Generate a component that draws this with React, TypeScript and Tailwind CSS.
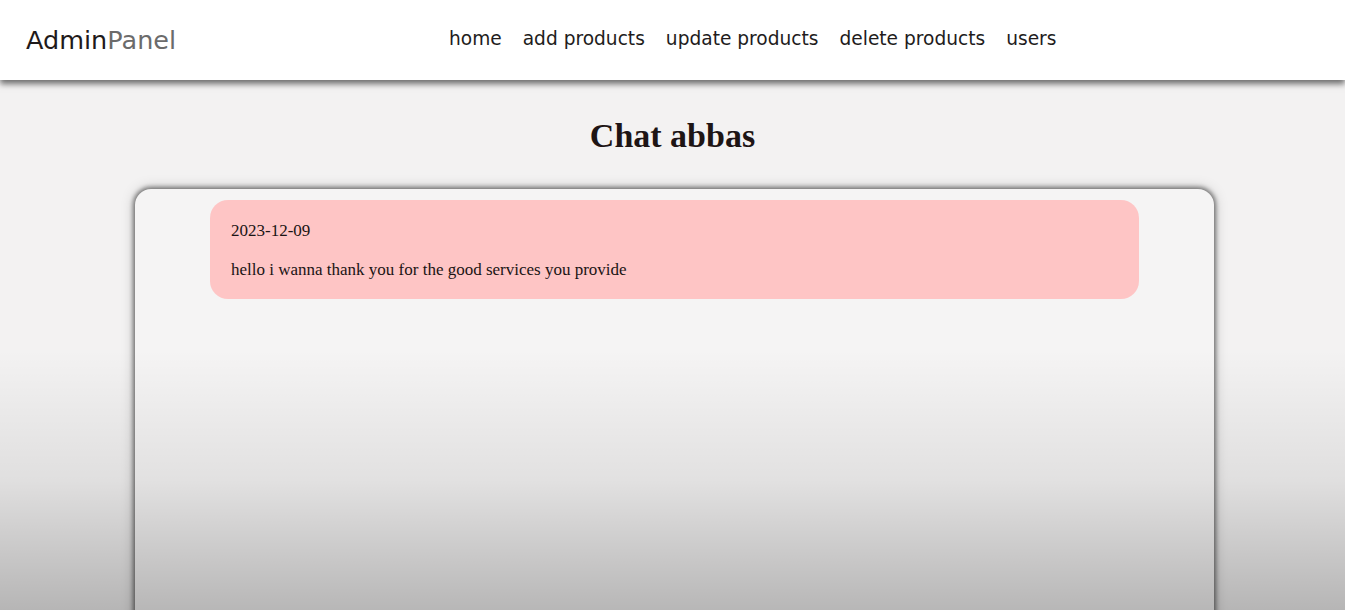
import React from 'react';

const links = ['home', 'add products', 'update products', 'delete products', 'users'];

const messages = [
  { id: 1, date: '2023-12-09', text: 'hello i wanna thank you for the good services you provide' },
];

export default function App() {
  return (
    <main className="relative min-h-screen h-[610px] overflow-hidden bg-[#f3f2f2]">
      <nav
        className="relative z-10 flex h-[80px] items-center bg-white px-[26px] shadow-[0_4px_6px_rgba(0,0,0,0.55)]"
        style={{ fontFamily: "'DejaVu Sans', Verdana, sans-serif" }}
      >
        <div className="w-[300px] text-[25.5px] text-[#1f1a1a]">
          Admin<span className="text-[#6b6b6b]">Panel</span>
        </div>
        <ul className="-mt-[3px] ml-[123px] flex gap-[21px] text-[18.6px] text-[#221c1c]">
          {links.map((l) => (
            <li key={l}>{l}</li>
          ))}
        </ul>
      </nav>

      <h1
        className="mt-[30px] text-center text-[34px] font-bold text-[#1e1515]"
        style={{ fontFamily: "'Liberation Serif', 'Times New Roman', serif" }}
      >
        Chat abbas
      </h1>

      <section
        className="ml-[135px] mt-[28px] h-[520px] w-[1079px] rounded-[16px] bg-[#f5f4f4] pt-[11px] shadow-[0_0_4px_2px_rgba(0,0,0,0.45),0_0_14px_rgba(0,0,0,0.25)]"
        style={{ fontFamily: "'Liberation Serif', 'Times New Roman', serif" }}
      >
        {messages.map((m) => (
          <div
            key={m.id}
            className="mx-auto h-[99px] w-[929px] rounded-[18px] bg-[#fec5c5] px-[21px] pt-[18px] text-[17px] text-[#1a1414]"
          >
            <p>{m.date}</p>
            <p className="mt-[13px]">{m.text}</p>
          </div>
        ))}
      </section>

      {/* darkening fade seen near the bottom of the capture */}
      <div className="pointer-events-none absolute inset-x-0 bottom-0 h-[260px] bg-gradient-to-b from-transparent via-[rgba(0,0,0,0.08)] to-[rgba(0,0,0,0.25)]" />
    </main>
  );
}
